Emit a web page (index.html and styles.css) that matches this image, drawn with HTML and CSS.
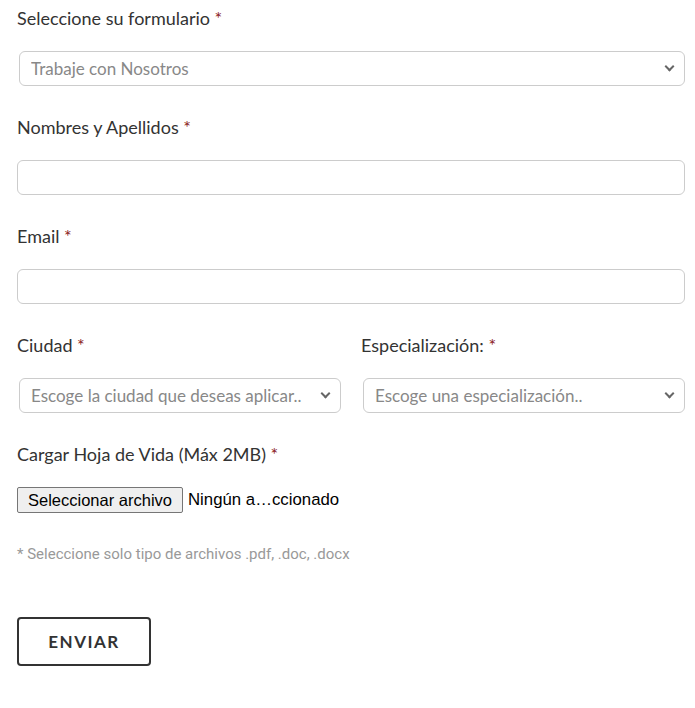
FILE: index.html
```html
<!DOCTYPE html>
<html lang="es">
<head>
    <meta charset="UTF-8">
    <meta name="viewport" content="width=device-width, initial-scale=1.0">
    <title>Trabaje con Nosotros</title>
    <link rel="stylesheet" href="styles.css">
</head>
<body>
    <form class="form">
        <div class="group">
            <label class="label">Seleccione su formulario <span class="req">*</span></label>
            <div class="select-wrap">
                <select class="field select">
                    <option>Trabaje con Nosotros</option>
                </select>
            </div>
        </div>
        <div class="group">
            <label class="label">Nombres y Apellidos <span class="req">*</span></label>
            <input type="text" class="field">
        </div>
        <div class="group">
            <label class="label">Email <span class="req">*</span></label>
            <input type="email" class="field">
        </div>
        <div class="group row">
            <div class="col">
                <label class="label">Ciudad <span class="req">*</span></label>
                <div class="select-wrap">
                    <select class="field select">
                        <option>Escoge la ciudad que deseas aplicar..</option>
                    </select>
                </div>
            </div>
            <div class="col">
                <label class="label">Especialización: <span class="req">*</span></label>
                <div class="select-wrap">
                    <select class="field select">
                        <option>Escoge una especialización..</option>
                    </select>
                </div>
            </div>
        </div>
        <div class="group">
            <label class="label">Cargar Hoja de Vida (Máx 2MB) <span class="req">*</span></label>
            <div class="file">
                <button type="button" class="file-btn">Seleccionar archivo</button>
                <span class="file-name">Ningún a…ccionado</span>
            </div>
        </div>
        <p class="hint">* Seleccione solo tipo de archivos .pdf, .doc, .docx</p>
        <button type="submit" class="submit">ENVIAR</button>
    </form>
</body>
</html>
```

FILE: styles.css
```css
body {
    margin: 0;
    background: #fff;
    font-family: Lato, "Open Sans", sans-serif;
    color: #333;
}
.form {
    padding: 5px 10px 0 17px;
}
.group {
    margin-bottom: 28px;
}
.label {
    display: block;
    font-size: 18px;
    line-height: 27px;
    margin-bottom: 19px;
    color: #333;
}
.req {
    color: #8b1a1a;
}
.field {
    display: block;
    box-sizing: border-box;
    width: 100%;
    height: 35px;
    border: 1px solid #ccc;
    border-radius: 6px;
    background: #fff;
    font-family: inherit;
    font-size: 17px;
    color: #888;
    padding: 0 11px;
    outline: none;
}
.select-wrap {
    position: relative;
    margin-left: 2px;
}
.select {
    appearance: none;
    -webkit-appearance: none;
    padding-right: 30px;
}
/* flechita del select */
.select-wrap::after {
    content: "";
    position: absolute;
    right: 12px;
    top: 12px;
    width: 5px;
    height: 5px;
    border-right: 2px solid #666;
    border-bottom: 2px solid #666;
    transform: rotate(45deg);
    pointer-events: none;
}
.row {
    display: grid;
    grid-template-columns: 1fr 1fr;
    column-gap: 20px;
}
.file {
    display: flex;
    align-items: center;
    gap: 5px;
    font-family: "Liberation Sans", Arial, sans-serif;
    font-size: 16.8px;
    color: #000;
}
.file-btn {
    height: 26px;
    padding: 0 10px;
    font-family: inherit;
    font-size: 16.5px;
    color: #000;
    background: #efefef;
    border: 1px solid #767676;
    border-radius: 2px;
}
.hint {
    margin: 32px 0 54px;
    font-family: Roboto, sans-serif;
    font-size: 15px;
    color: #999;
}
.submit {
    width: 134px;
    height: 49px;
    background: #fff;
    border: 2px solid #333;
    border-radius: 4px;
    font-family: Lato, sans-serif;
    font-weight: bold;
    font-size: 17px;
    letter-spacing: 1.5px;
    color: #333;
}
```
